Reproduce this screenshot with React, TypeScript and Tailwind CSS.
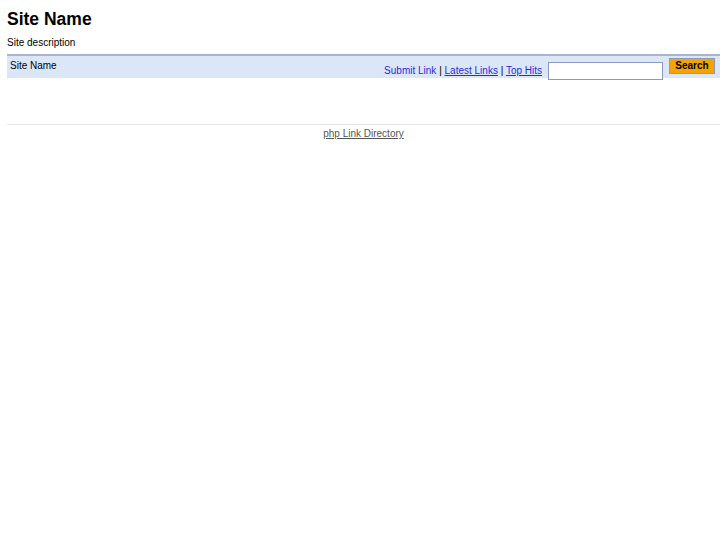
export default function App() {
  return (
    <div className="min-h-screen bg-white px-[7px] pt-[8px] text-black" style={{ fontFamily: '"Liberation Sans", Arial, sans-serif' }}>
      {/* Header */}
      <h1 className="text-[17.5px] font-bold leading-[22px]">Site Name</h1>
      <p className="mt-[7px] text-[10px] leading-[12px]">Site description</p>

      {/* Nav bar */}
      <div className="mt-[5px] flex h-[24px] items-start justify-between border-t-2 border-[#a9b4d4] bg-[#dbe7f7]">
        <div className="pl-[3px] pt-[4px] text-[10px] leading-[12px]">Site Name</div>
        <div className="flex items-start">
          <div className="pt-[9px] text-[10px] leading-[12px] text-[#2b2bd9]">
            <a href="#" className="no-underline">Submit Link</a>
            <span className="text-black"> | </span>
            <a href="#" className="underline">Latest Links</a>
            <span className="text-black"> | </span>
            <a href="#" className="underline">Top Hits </a>
          </div>
          <input
            type="text"
            className="ml-[6px] mt-[6px] h-[18px] w-[115px] border border-[#8c99c0] bg-white"
          />
          <button className="ml-[6px] mr-[5px] mt-[2px] h-[16px] w-[46px] border border-[#8c99c0] bg-[#f5a300] text-[10px] font-bold leading-[14px]">
            Search
          </button>
        </div>
      </div>

      {/* Footer */}
      <div className="mt-[46px] border-t border-[#e6e6e6] pt-[3px] text-center text-[10px] leading-[12px]">
        <a href="#" className="text-[#555555] underline">php Link Directory</a>
      </div>
    </div>
  );
}
